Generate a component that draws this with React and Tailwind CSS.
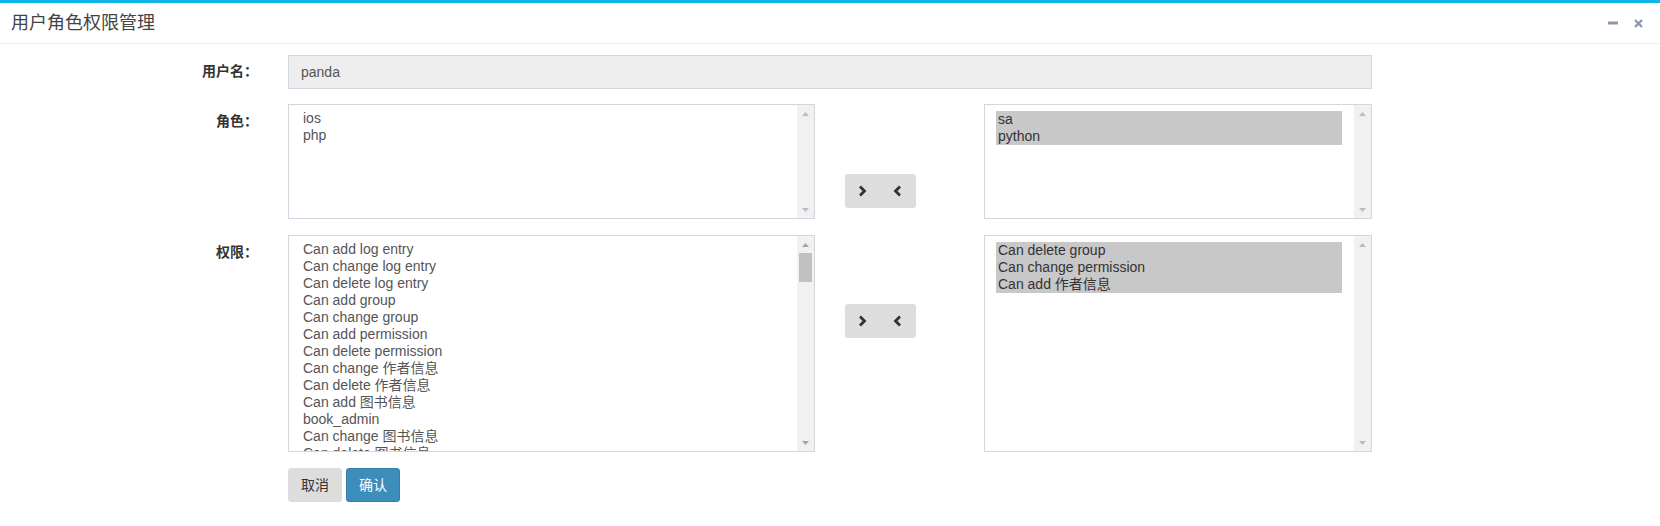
import React from 'react';

const FONT = "font-['Liberation_Sans','Noto_Sans_CJK_SC',sans-serif]";

const roles = ['ios', 'php'];
const userRoles = ['sa', 'python'];
const perms = [
  'Can add log entry',
  'Can change log entry',
  'Can delete log entry',
  'Can add group',
  'Can change group',
  'Can add permission',
  'Can delete permission',
  'Can change 作者信息',
  'Can delete 作者信息',
  'Can add 图书信息',
  'book_admin',
  'Can change 图书信息',
  'Can delete 图书信息',
];
const userPerms = ['Can delete group', 'Can change permission', 'Can add 作者信息'];

const Arrow = ({ up, color }) => (
  <svg width="7" height="4" viewBox="0 0 7 4">
    <path d={up ? 'M0 4 L3.5 0 L7 4 Z' : 'M0 0 L3.5 4 L7 0 Z'} fill={color} />
  </svg>
);

const ScrollBar = ({ thumb, color }) => (
  <div className="w-[17px] bg-[#f1f1f1] flex flex-col shrink-0">
    <div className="h-[17px] flex items-center justify-center">
      <Arrow up color={color} />
    </div>
    <div className="flex-1 px-[2px]">
      {thumb && <div className="h-[29px] bg-[#c1c1c1]" />}
    </div>
    <div className="h-[17px] flex items-center justify-center">
      <Arrow color={color} />
    </div>
  </div>
);

const ListBox = ({ items, width, height, selected, thumb }) => (
  <div
    className={`flex border border-[#d2d6de] bg-white overflow-hidden ${width} ${height}`}
  >
    <div className={`flex-1 overflow-hidden ${selected ? 'pl-[11px] pr-[12px] pt-[6px]' : 'pl-[14px] pt-[5px]'}`}>
      {items.map((it) => (
        <div
          key={it}
          className={`leading-[17px] whitespace-nowrap ${selected ? 'bg-[#c8c8c8] text-[#333] px-[2px]' : 'text-[#555]'}`}
        >
          {it}
        </div>
      ))}
    </div>
    <ScrollBar thumb={thumb} color={thumb ? '#a3a3a3' : '#bdbdbd'} />
  </div>
);

const Chevron = ({ left }) => (
  <svg width="9" height="12" viewBox="0 0 9 12">
    <path
      d={left ? 'M7 1.5 L2.5 6 L7 10.5' : 'M2 1.5 L6.5 6 L2 10.5'}
      fill="none"
      stroke="#333"
      strokeWidth="2.8"
    />
  </svg>
);

const Transfer = ({ top }) => (
  <div className={`ml-[30px] ${top} w-[71px] h-[34px] bg-[#dddddd] rounded-[3px] flex items-center pl-[13px] gap-[26px]`}>
    <Chevron />
    <Chevron left />
  </div>
);

const Label = ({ children }) => (
  <div className="w-[258px] shrink-0 text-right font-bold text-[#333] leading-[20px] pt-[7px]">
    {children}
  </div>
);

export default function App() {
  return (
    <div className={`w-[1660px] h-[526px] bg-white text-[14px] ${FONT}`}>
      <div className="h-[3px] bg-[#10b5e8]" />
      <div className="h-[41px] flex items-center justify-between border-b border-[#eeeeee] pl-[11px] pr-[17px]">
        <span className="text-[18px] text-[#444] leading-none">用户角色权限管理</span>
        <div className="flex items-center gap-[16px]">
          <svg width="10" height="4" viewBox="0 0 10 4">
            <rect x="0" y="0.5" width="10" height="3" fill="#8e98a8" />
          </svg>
          <svg width="9" height="9" viewBox="0 0 9 9">
            <path d="M1 1 L8 8 M8 1 L1 8" stroke="#8e98a8" strokeWidth="2.4" />
          </svg>
        </div>
      </div>

      <div className="pt-[11px]">
        <div className="flex">
          <div className="w-[258px] shrink-0 text-right font-bold text-[#333] leading-[20px] pt-[6px]">
            用户名：
          </div>
          <div className="ml-[30px] w-[1084px] h-[34px] bg-[#eeeeee] border border-[#d2d6de] flex items-center pl-[12px] text-[#555]">
            panda
          </div>
        </div>

        <div className="flex mt-[15px]">
          <Label>角色：</Label>
          <div className="ml-[30px]">
            <ListBox items={roles} width="w-[527px]" height="h-[115px]" />
          </div>
          <Transfer top="mt-[70px]" />
          <div className="ml-[68px]">
            <ListBox items={userRoles} width="w-[388px]" height="h-[115px]" selected />
          </div>
        </div>

        <div className="flex mt-[16px]">
          <Label>权限：</Label>
          <div className="ml-[30px]">
            <ListBox items={perms} width="w-[527px]" height="h-[217px]" thumb />
          </div>
          <Transfer top="mt-[69px]" />
          <div className="ml-[68px]">
            <ListBox items={userPerms} width="w-[388px]" height="h-[217px]" selected />
          </div>
        </div>

        <div className="flex mt-[16px] pl-[288px] gap-[4px]">
          <button className="w-[54px] h-[34px] bg-[#dddddd] text-[#333] rounded-[3px] border border-[#dddddd]">
            取消
          </button>
          <button className="w-[54px] h-[34px] bg-[#3c8dbc] text-white rounded-[3px] border border-[#367fa9]">
            确认
          </button>
        </div>
      </div>
    </div>
  );
}
